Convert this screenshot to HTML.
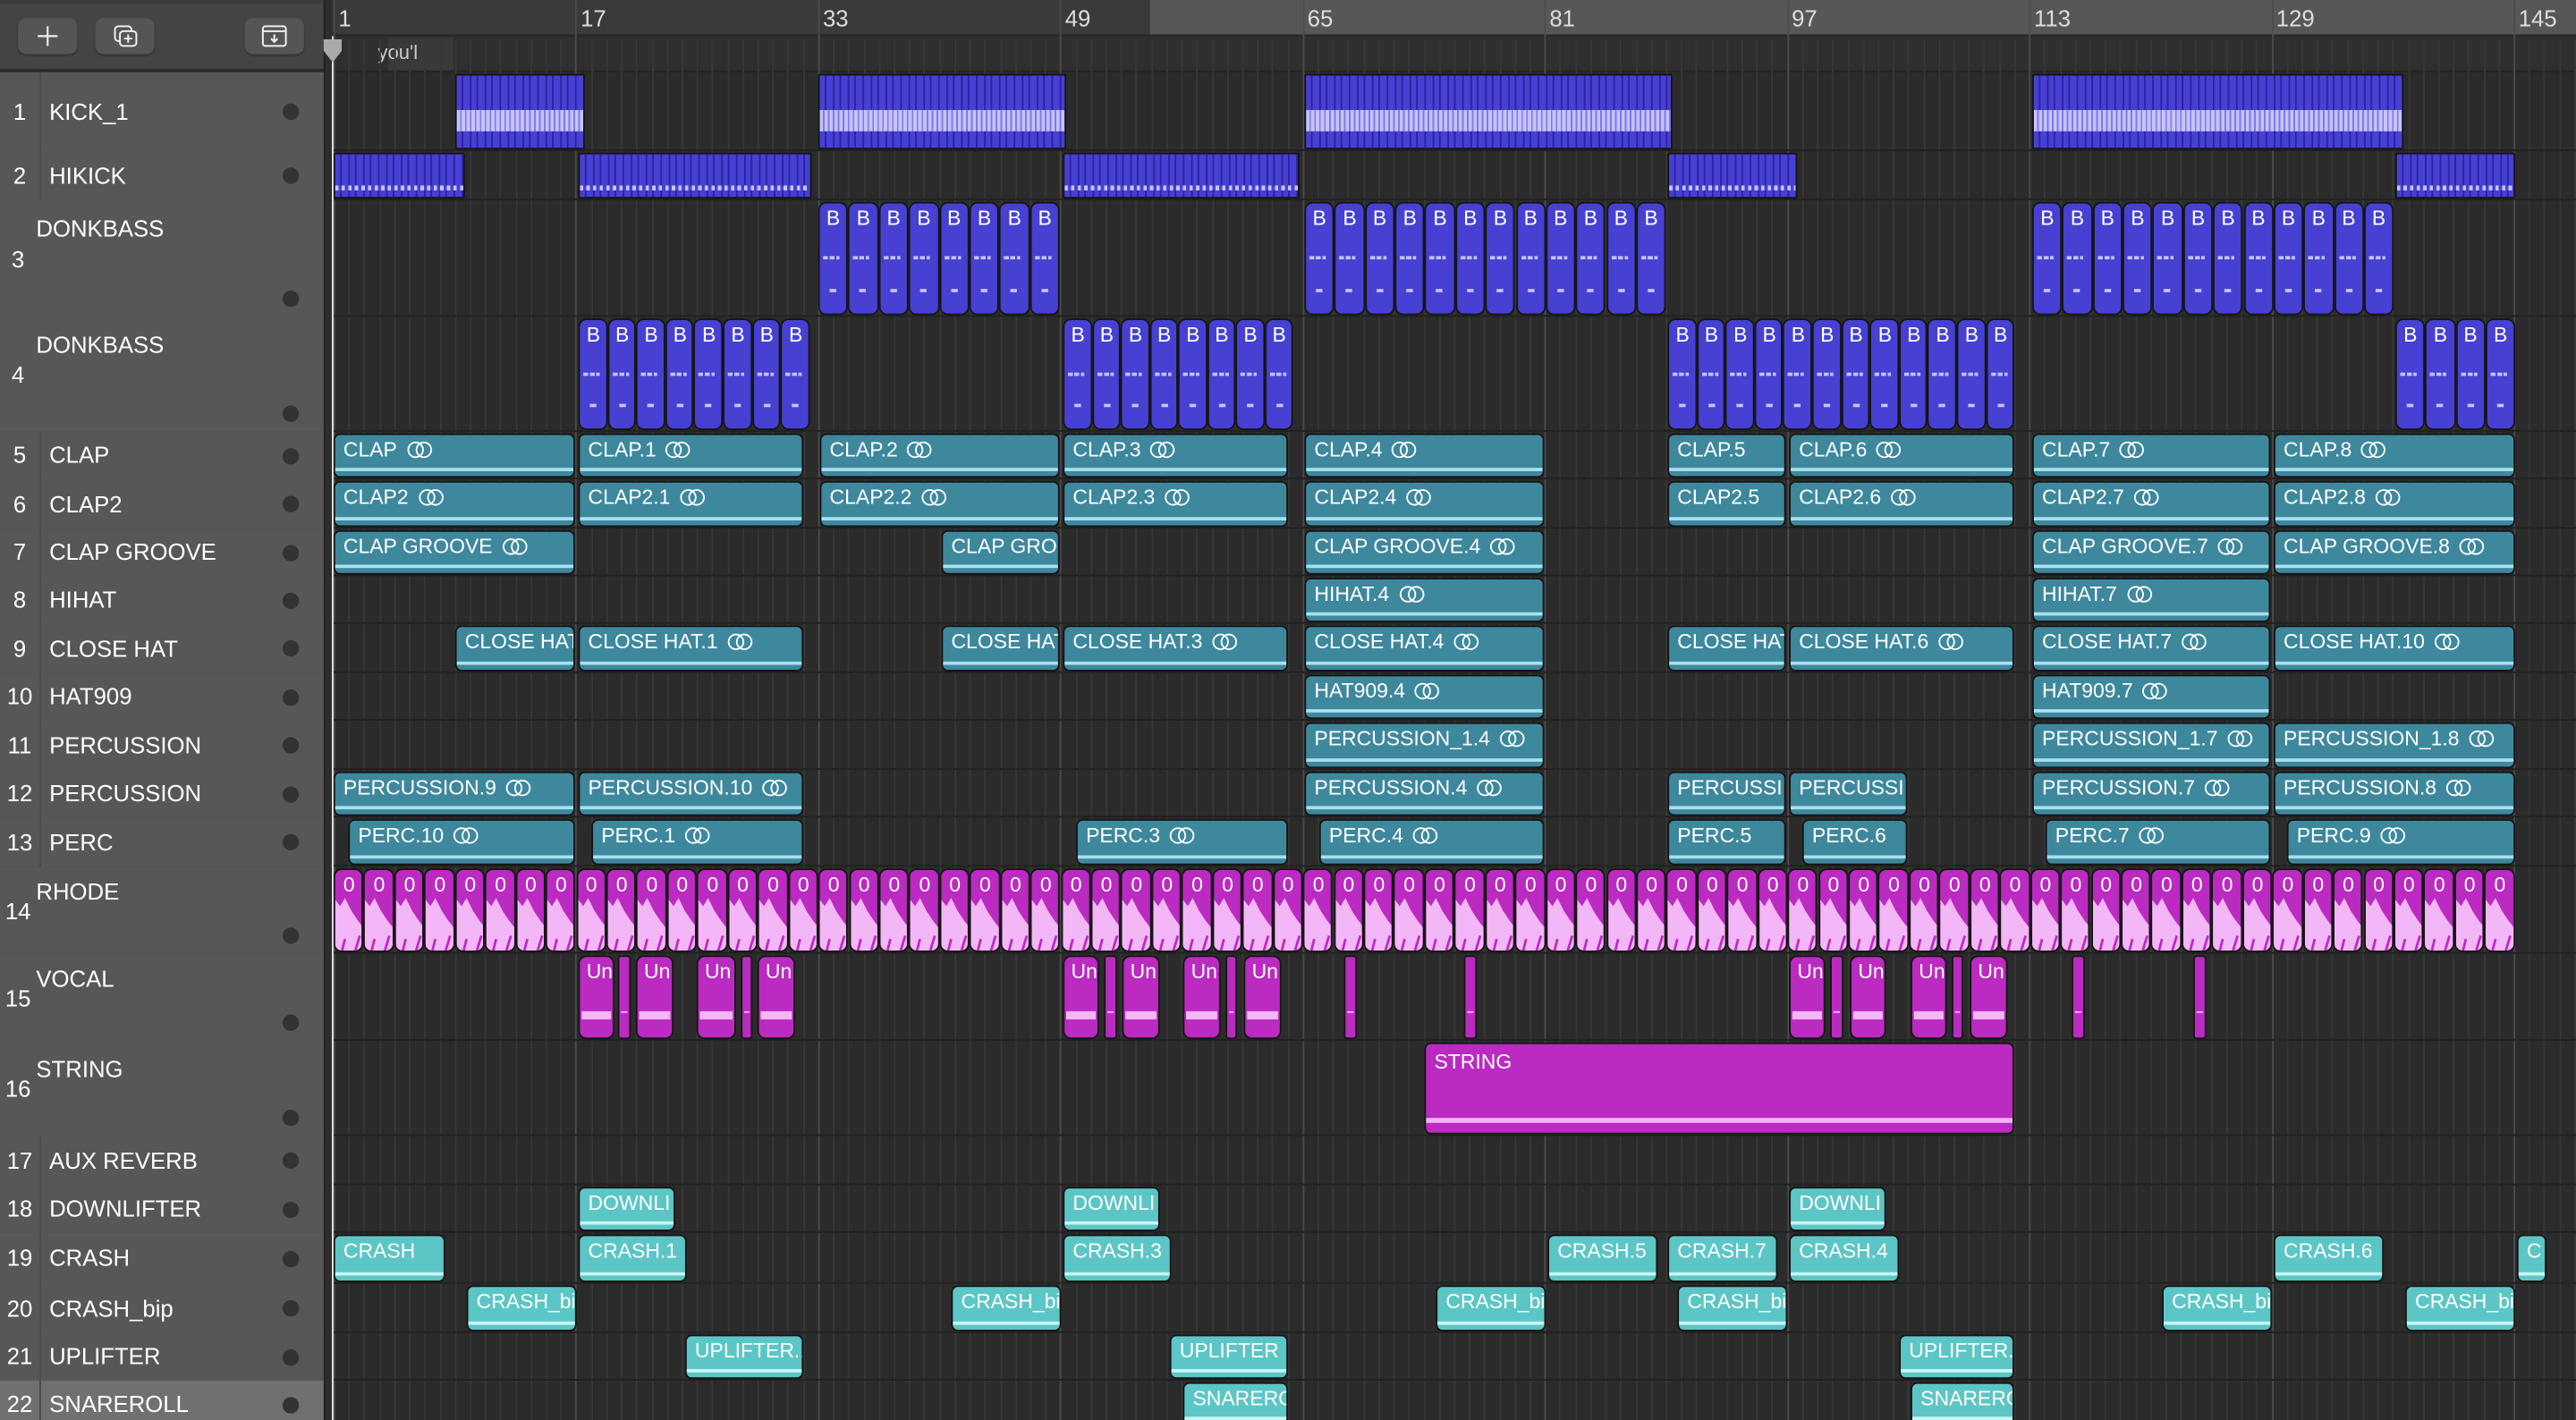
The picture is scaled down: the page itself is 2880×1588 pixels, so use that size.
<!DOCTYPE html>
<html><head><meta charset="utf-8"><style>
html,body{margin:0;padding:0;background:#2b2b2b;overflow:hidden}
body{width:2880px;height:1588px}
#w{position:absolute;left:0;top:0;width:1568px;height:865px;transform:scale(1.83673,1.83584);transform-origin:0 0;font-family:"Liberation Sans",sans-serif;overflow:hidden;background:#2b2b2b}
.a{position:absolute;box-sizing:border-box}
.tr{position:absolute;left:0;width:197px;background:#575757;border-bottom:1px solid #444;color:#fff;font-size:14px}
.tr .n{position:absolute;left:0;width:24px;text-align:center;border-right:1px solid #4a4a4a;height:100%}
.tr .d{position:absolute;left:172px;width:10px;height:10px;border-radius:50%;background:#333}
.rg{position:absolute;box-sizing:border-box;border:1px solid #151515;border-radius:4px;color:#fff;font-size:12.5px;overflow:hidden;white-space:nowrap;padding:2px 0 0 5px}
.t{background:#3e889e}.t::after,.c::after{content:"";position:absolute;left:0;right:0;bottom:3px;height:2px;background:#a8e0ee}
.c{background:#5cc6c6}.c::after{background:#c8f6f6}
.ri{display:inline-block;width:14px;height:10px;position:relative;margin-left:6px;vertical-align:-1px}
.ri::before,.ri::after{content:"";position:absolute;top:0;width:8px;height:8px;border:1.3px solid #fff;border-radius:50%}
.ri::before{left:0}.ri::after{left:5px}
.b{background:#4641d2}
.m{background:#bb2ac1}
.btn{background:#555;border-radius:5px;box-shadow:0 1px 1px #333}
</style></head><body><div id="w">
<!-- header -->
<div class="a" style="left:0;top:0;width:197px;height:43px;background:#444;border-bottom:1px solid #2a2a2a;border-top:2px solid #3a3a3a"></div>
<div class="a btn" style="left:11px;top:11px;width:36px;height:22px"><svg width="36" height="22"><path d="M18 5v12M12 11h12" stroke="#eee" stroke-width="1.2"/></svg></div>
<div class="a btn" style="left:58px;top:11px;width:36px;height:22px"><svg width="36" height="22"><rect x="12" y="5" width="10" height="9" rx="2" fill="none" stroke="#eee" stroke-width="1.1"/><rect x="15" y="8" width="10" height="9" rx="2" fill="#555" stroke="#eee" stroke-width="1.1"/><path d="M20 10v5M17.5 12.5h5" stroke="#eee" stroke-width="1.1"/></svg></div>
<div class="a btn" style="left:149px;top:11px;width:36px;height:22px"><svg width="36" height="22"><rect x="11" y="5" width="14" height="12" rx="1.5" fill="none" stroke="#eee" stroke-width="1.1"/><path d="M11 8h14M18 10v4.5M16 12.5l2 2 2-2" fill="none" stroke="#eee" stroke-width="1.1"/></svg></div>
<!-- ruler -->
<div class="a" style="left:197px;top:0;width:1371px;height:22px;background:#3a3a3a;border-bottom:1px solid #222"></div>
<div class="a" style="left:700px;top:0;width:868px;height:22px;background:#575757;border-bottom:1px solid #222"></div>
<div class="a" style="left:197px;top:22px;width:1371px;height:22px;background:#2f2f2f;border-bottom:1px solid #222"></div>
<div class="a" style="left:236px;top:23px;width:40px;height:20px;background:#393939"></div>
<div class="a" style="left:230px;top:25px;color:#ccc;font-size:12px">you'l</div>
<div id="grid"></div>
<div id="regs"></div>
<div class="a" style="left:202px;top:22px;width:1px;height:843px;background:#eee"></div>
<div class="a" style="left:197px;top:0;width:5px;height:865px;background:#2d2d2d;border-left:1px solid #222"></div>
<div class="a" style="left:196px;top:23px;width:14px;height:18px"><svg width="14" height="18"><path d="M1 1h11v7l-5.5 7-5.5-7z" fill="#aaa"/></svg></div>
<div id="tracks"></div>
</div>
<script>
var W=document.getElementById('w');
function X(b){return 203+(b-1)*9.215}
var rows=[[44,92,'KICK_1',0],[92,122,'HIKICK',0],[122,193,'DONKBASS',1],[193,263,'DONKBASS',1],[263,292,'CLAP',0],[292,322,'CLAP2',0],[322,351,'CLAP GROOVE',0],[351,380,'HIHAT',0],[380,410,'CLOSE HAT',0],[410,439,'HAT909',0],[439,469,'PERCUSSION',0],[469,498,'PERCUSSION',0],[498,528,'PERC',0],[528,581,'RHODE',1],[581,634,'VOCAL',1],[634,692,'STRING',1],[692,722,'AUX REVERB',0],[722,751,'DOWNLIFTER',0],[751,782,'CRASH',0],[782,812,'CRASH_bip',0],[812,841,'UPLIFTER',0],[841,870,'SNAREROLL',0]];
var h='';
for(var b=1;b<=150;b++){var x=X(b);var big=(b-1)%16==0;
h+='<div class="a" style="left:'+x.toFixed(1)+'px;top:'+(big?0:24)+'px;width:1px;height:'+(big?865:841)+'px;background:'+(big?'#4c4c4c':'#383838')+'"></div>';
if(big)h+='<div class="a" style="left:'+(x+3).toFixed(1)+'px;top:3px;color:#ddd;font-size:14px">'+b+'</div>';}
rows.forEach(function(r){h+='<div class="a" style="left:197px;top:'+(r[1]-1)+'px;width:1371px;height:1px;background:#202020"></div>'});
document.getElementById('grid').outerHTML=h;
h='';rows.forEach(function(r,i){var H=r[1]-r[0];var last=i==21;
h+='<div class="tr" style="top:'+r[0]+'px;height:'+H+'px;'+(last?'background:#707070':'')+'">';
if(r[3]){h+='<div class="n" style="border:none;width:22px;padding-top:'+(H*0.5)+'px;line-height:0">'+(i+1)+'</div><div class="a" style="left:22px;top:'+(H>55?9:7)+'px">'+r[2]+'</div><div class="d" style="top:'+(H-16)+'px"></div>';}
else{h+='<div class="n" style="line-height:'+H+'px">'+(i+1)+'</div><div class="a" style="left:30px;top:0;line-height:'+H+'px">'+r[2]+'</div><div class="d" style="top:'+(H/2-5)+'px"></div>';}
h+='</div>';});
document.getElementById('tracks').outerHTML=h;
h='';
function R(row,x1,x2,cls,txt,ic,inner){var r=rows[row-1];h+='<div class="rg '+cls+'" style="left:'+x1+'px;top:'+(r[0]+1)+'px;width:'+(x2-x1)+'px;height:'+(r[1]-r[0]-2)+'px">'+(txt||'')+(ic?'<span class="ri"></span>':'')+(inner||'')+'</div>';}
function kick(row,x1,x2,wave){var r=rows[row-1],H=r[1]-r[0]-2;var s='';for(var x=3;x<x2-x1;x+=4.6){s+='<div class="a" style="left:'+x.toFixed(1)+'px;top:0;width:1px;height:100%;background:#2a22a0"></div>'}
if(wave)s+='<div class="a" style="left:0;right:0;top:'+(H*0.45)+'px;height:'+(H*0.3)+'px;background:repeating-linear-gradient(90deg,#c6c3ff 0 2px,#7f7ae8 2px 3px)"></div>';else s+='<div class="a" style="left:0;right:0;bottom:4px;height:3px;background:repeating-linear-gradient(90deg,#c6c3ff 0 2px,#4641d2 2px 4px)"></div>';
h+='<div class="rg b" style="left:'+x1+'px;top:'+(r[0]+1)+'px;width:'+(x2-x1)+'px;height:'+H+'px;border-radius:1px;padding:0">'+s+'</div>';}
[[277,356],[498,649],[794,1018],[1237,1463]].forEach(function(a){kick(1,a[0],a[1],1)});
[[203,283],[352,494],[647,791],[1015,1094],[1458,1531]].forEach(function(a){kick(2,a[0],a[1],0)});
function bass(row,x1,n,w){var r=rows[row-1],H=r[1]-r[0]-2;for(var k=0;k<n;k++){var x=x1+k*w;var ww=Math.min(w,1531-x);
h+='<div class="rg b" style="left:'+x.toFixed(1)+'px;top:'+(r[0]+1)+'px;width:'+(ww).toFixed(1)+'px;height:'+H+'px;border-radius:5px;padding:2px 0 0 4px">B<div class="a" style="left:2px;top:'+(H*0.47)+'px;width:10px;height:2px;background:repeating-linear-gradient(90deg,#c6c3ff 0 3px,transparent 3px 4px)"></div><div class="a" style="left:6px;top:'+(H*0.75)+'px;width:4px;height:2px;background:#c6c3ff"></div></div>';}}
bass(3,498,8,18.4);bass(3,794,12,18.35);bass(3,1237,12,18.35);
bass(4,352,8,17.6);bass(4,647,8,17.5);bass(4,1015,12,17.6);bass(4,1458,4,18.3);
var T='t';
[[203,350,'CLAP',1],[352,489,'CLAP.1',1],[499,645,'CLAP.2',1],[647,784,'CLAP.3',1],[794,940,'CLAP.4',1],[1015,1087,'CLAP.5',0],[1089,1226,'CLAP.6',1],[1237,1382,'CLAP.7',1],[1384,1531,'CLAP.8',1]].forEach(function(a){R(5,a[0],a[1],T,a[2],a[3])});
[[203,350,'CLAP2',1],[352,489,'CLAP2.1',1],[499,645,'CLAP2.2',1],[647,784,'CLAP2.3',1],[794,940,'CLAP2.4',1],[1015,1087,'CLAP2.5',0],[1089,1226,'CLAP2.6',1],[1237,1382,'CLAP2.7',1],[1384,1531,'CLAP2.8',1]].forEach(function(a){R(6,a[0],a[1],T,a[2],a[3])});
[[203,350,'CLAP GROOVE',1],[573,645,'CLAP GRO',0],[794,940,'CLAP GROOVE.4',1],[1237,1382,'CLAP GROOVE.7',1],[1384,1531,'CLAP GROOVE.8',1]].forEach(function(a){R(7,a[0],a[1],T,a[2],a[3])});
R(8,794,940,T,'HIHAT.4',1);R(8,1237,1382,T,'HIHAT.7',1);
[[277,350,'CLOSE HAT',0],[352,489,'CLOSE HAT.1',1],[573,645,'CLOSE HAT',0],[647,784,'CLOSE HAT.3',1],[794,940,'CLOSE HAT.4',1],[1015,1087,'CLOSE HAT',0],[1089,1226,'CLOSE HAT.6',1],[1237,1382,'CLOSE HAT.7',1],[1384,1531,'CLOSE HAT.10',1]].forEach(function(a){R(9,a[0],a[1],T,a[2],a[3])});
R(10,794,940,T,'HAT909.4',1);R(10,1237,1382,T,'HAT909.7',1);
R(11,794,940,T,'PERCUSSION_1.4',1);R(11,1237,1382,T,'PERCUSSION_1.7',1);R(11,1384,1531,T,'PERCUSSION_1.8',1);
[[203,350,'PERCUSSION.9',1],[352,489,'PERCUSSION.10',1],[794,940,'PERCUSSION.4',1],[1015,1087,'PERCUSSI',0],[1089,1161,'PERCUSSI',0],[1237,1382,'PERCUSSION.7',1],[1384,1531,'PERCUSSION.8',1]].forEach(function(a){R(12,a[0],a[1],T,a[2],a[3])});
[[212,350,'PERC.10',1],[360,489,'PERC.1',1],[655,784,'PERC.3',1],[803,940,'PERC.4',1],[1015,1087,'PERC.5',0],[1097,1161,'PERC.6',0],[1245,1382,'PERC.7',1],[1392,1531,'PERC.9',1]].forEach(function(a){R(13,a[0],a[1],T,a[2],a[3])});
var r14=rows[13];for(var k=0;k<72;k++){var x=203+k*18.44;
h+='<div class="rg m" style="left:'+x.toFixed(1)+'px;top:'+(r14[0]+1)+'px;width:18.4px;height:51px;border-radius:5px;padding:2px 0 0 5px">0<svg class="a" style="left:0;top:16px" width="18" height="34"><path d="M0 2l3 4 3-5 4 8 4 6 4 5v14h-18z" fill="#f3b6f6"/><path d="M4 34l2-8M12 34l3-10" stroke="#bb2ac1" stroke-width="1.5"/></svg></div>';}
var r15=rows[14];
[[352,374,1],[376,384,0],[387,410,1],[424,448,1],[451,458,0],[461,484,1],[647,669,1],[672,680,0],[683,706,1],[720,743,1],[746,753,0],[757,780,1],[818,826,0],[891,899,0],[1089,1111,1],[1114,1122,0],[1126,1148,1],[1163,1185,1],[1188,1195,0],[1199,1222,1],[1261,1269,0],[1335,1343,0]].forEach(function(a){
h+='<div class="rg m" style="left:'+a[0]+'px;top:'+(r15[0]+1)+'px;width:'+(a[1]-a[0])+'px;height:51px;border-radius:'+(a[2]?5:2)+'px;padding:2px 0 0 4px">'+(a[2]?'Un':'')+'<div class="a" style="left:1px;right:1px;top:33px;height:'+(a[2]?5:1)+'px;background:#f3b6f6"></div></div>';});
var r16=rows[15];h+='<div class="rg m" style="left:867px;top:'+(r16[0]+1)+'px;width:359px;height:56px;padding:4px 0 0 5px">STRING<div class="a" style="left:0;right:0;top:45px;height:3px;background:#f3b6f6"></div></div>';
var C='c';
R(18,352,411,C,'DOWNLI');R(18,647,706,C,'DOWNLI');R(18,1089,1148,C,'DOWNLI');
[[203,271,'CRASH'],[352,418,'CRASH.1'],[647,713,'CRASH.3'],[942,1009,'CRASH.5'],[1015,1082,'CRASH.7'],[1089,1156,'CRASH.4'],[1384,1451,'CRASH.6'],[1532,1550,'C']].forEach(function(a){R(19,a[0],a[1],C,a[2])});
[284,579,874,1021,1316,1464].forEach(function(x){R(20,x,x+67,C,'CRASH_bi')});
R(21,417,489,C,'UPLIFTER.1');R(21,712,784,C,'UPLIFTER');R(21,1156,1226,C,'UPLIFTER.');
R(22,720,784,C,'SNARERO');R(22,1163,1226,C,'SNARERO');
document.getElementById('regs').outerHTML=h;
</script>
</body></html>
